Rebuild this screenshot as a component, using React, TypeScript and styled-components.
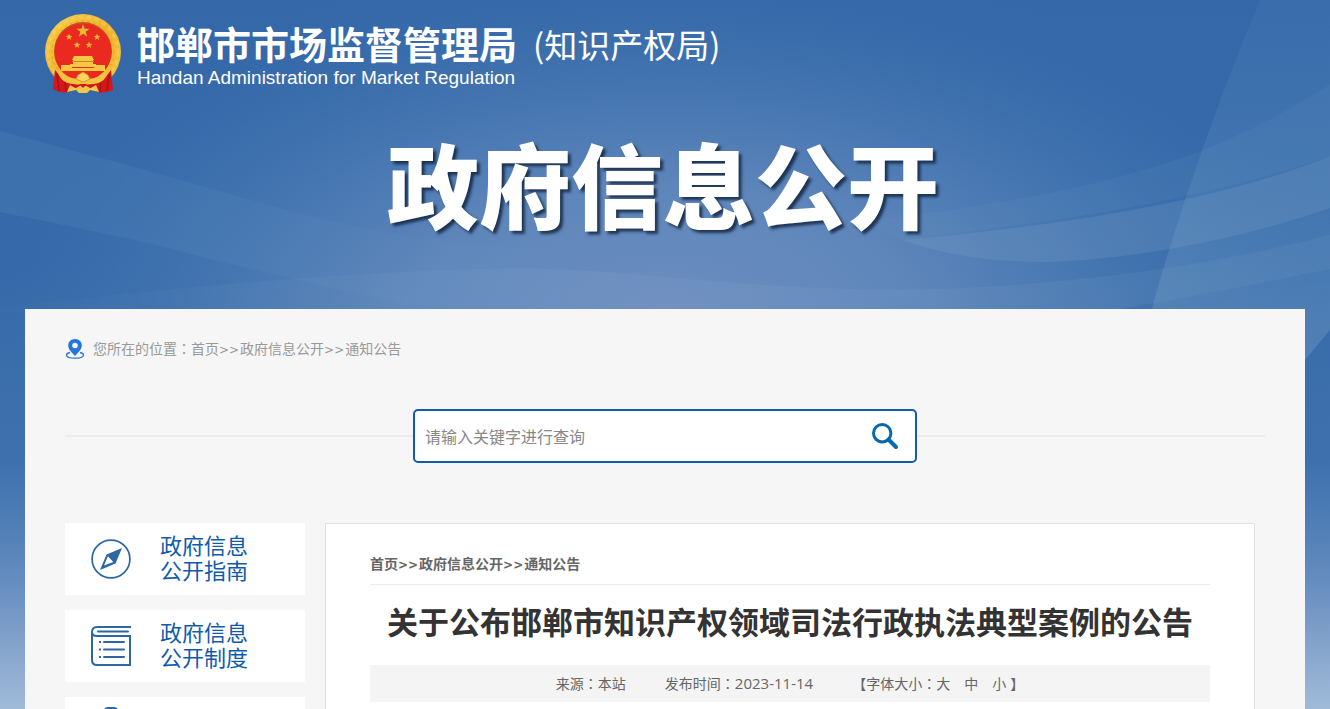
import React from 'react';
import styled, { createGlobalStyle } from 'styled-components';

const sans = '"Noto Sans CJK SC", "Liberation Sans", sans-serif';
const brand = '#0f5bad';

const GlobalStyle = createGlobalStyle`
  *, *::before, *::after { box-sizing: border-box; }
  body { margin: 0; font-family: ${sans}; background: #9fbad9; }
  a { color: inherit; text-decoration: none; }
  h1, h2, p { margin: 0; }
`;

const Page = styled.div`
  position: relative;
  height: 100vh;
  overflow: hidden;
  background: linear-gradient(#3568a9 0, #3469aa 260px, #3b6eab 380px, #3e70ae 460px, #5482b8 540px, #6a8fc1 590px, #86a5cc 650px, #a0bbd9 709px);
`;

const Backdrop = styled.svg`
  position: absolute;
  top: 0;
  left: 0;
  width: 100%;
  height: 709px;
`;

const Inner = styled.div`
  position: relative;
  max-width: 1280px;
  margin: 0 auto;
`;

const Header = styled.header`
  display: flex;
  flex-direction: column;
  height: 309px;
  color: #fff;
`;

const Brand = styled.a`
  display: flex;
  align-items: flex-start;
  padding: 12px 0 0 18px;
`;

const BrandText = styled.div`
  display: flex;
  flex-direction: column;
  margin-left: 16px;
  padding-top: 10px;
`;

const BrandNames = styled.div`
  display: flex;
  align-items: center;
  gap: 16px;
  height: 44px;
  white-space: nowrap;
`;

const OrgName = styled.span`
  font-size: 38px;
  font-weight: 700;
  line-height: 44px;
  padding-bottom: 2px;
`;

const OrgSuffix = styled.span`
  font-size: 33px;
  line-height: 42px;
`;

const OrgEnglish = styled.span`
  font: 19px/24px "Liberation Sans", sans-serif;
`;

const Banner = styled.p`
  padding: 28px 4px 0 0;
  text-align: center;
  font-size: 92px;
  font-weight: 900;
  line-height: 120px;
  text-shadow: 3px 3px 3px rgba(10, 25, 50, 0.75);
`;

const Panel = styled.main`
  background: #f6f6f6;
  padding: 28px 40px 40px;
`;

const Location = styled.nav`
  display: flex;
  align-items: center;
  height: 24px;
  color: #999;
  font-size: 14px;
`;

const LocationText = styled.span`
  margin-left: 8px;
  line-height: 22px;
`;

const Separator = styled.span`
  padding-right: 1px;
  font-family: "DejaVu Sans", sans-serif;
  font-size: 12px;
  font-weight: inherit;
`;

/* The Traditional Chinese face centres the full-width colon in its cell. */
const Colon = styled.span`
  font-family: "Noto Sans CJK TC", sans-serif;
`;

const SearchRow = styled.form`
  display: flex;
  align-items: center;
  margin-top: 48px;

  &::before, &::after {
    content: '';
    flex: 1;
    height: 2px;
    background: #ececec;
  }
`;

const SearchBox = styled.div`
  display: flex;
  width: 504px;
  height: 54px;
  border: 2px solid ${brand};
  border-radius: 5px;
  background: #fff;
`;

const SearchInput = styled.input`
  flex: 1;
  min-width: 0;
  padding: 0 10px;
  border: 0;
  background: none;
  outline: none;
  font: 16px/24px ${sans};
  color: #333;

  &::placeholder { color: #888; opacity: 1; }
`;

const SearchButton = styled.button`
  display: flex;
  align-items: center;
  justify-content: center;
  width: 60px;
  padding: 0;
  border: 0;
  background: none;
  cursor: pointer;
`;

const Columns = styled.div`
  display: flex;
  align-items: flex-start;
  gap: 20px;
  margin-top: 60px;
  padding-right: 10px;
`;

const Sidebar = styled.nav`
  display: flex;
  flex-direction: column;
  gap: 15px;
  flex: 0 0 240px;
`;

const SideLink = styled.a`
  display: flex;
  align-items: center;
  gap: 29px;
  height: 72px;
  padding-left: 26px;
  background: #fff;
  color: ${brand};
  font-size: 22px;
  line-height: 25px;
`;

const SideLabel = styled.span`
  padding-bottom: 4px;
`;

const Article = styled.article`
  flex: 1;
  min-width: 0;
  padding: 20px 44px 60px;
  border: 1px solid #e0e0e0;
  background: #fff;
`;

const Trail = styled.nav`
  height: 41px;
  border-bottom: 1px solid #ebebeb;
  color: #666;
  font-size: 14px;
  font-weight: 700;
  line-height: 38px;
`;

const Title = styled.h1`
  padding: 14px 0 22px;
  color: #333;
  font-size: 31px;
  font-weight: 700;
  line-height: 44px;
  text-align: center;
`;

const Meta = styled.div`
  display: flex;
  justify-content: center;
  gap: 39px;
  height: 37px;
  background: #f4f4f4;
  color: #666;
  font-size: 14px;
  line-height: 37px;
  white-space: nowrap;
`;

const Published = styled.time`
  font-family: "Open Sans", sans-serif;
  font-size: 15px;
`;

const Sizes = styled.span`
  display: flex;
`;

const SizeButton = styled.button`
  margin-right: 14px;
  padding: 0;
  border: 0;
  background: none;
  color: inherit;
  font: inherit;
  cursor: pointer;

  &:last-of-type { margin-right: 4px; }
`;

const starPoints = (cx: number, cy: number, r: number) =>
  Array.from({ length: 10 }, (_, i) => {
    const radius = i % 2 ? r * 0.4 : r;
    const angle = (Math.PI / 5) * i - Math.PI / 2;
    return `${(cx + radius * Math.cos(angle)).toFixed(2)},${(cy + radius * Math.sin(angle)).toFixed(2)}`;
  }).join(' ');

const Sky = () => (
  <Backdrop viewBox="0 0 1330 709" preserveAspectRatio="xMidYMin slice" aria-hidden="true">
    <defs>
      <radialGradient id="glow" gradientUnits="userSpaceOnUse" cx="0" cy="0" r="1" gradientTransform="translate(665 310) scale(700 350)">
        <stop offset="0" stopColor="#6d8dbf" />
        <stop offset="0.35" stopColor="#6188bc" stopOpacity="0.94" />
        <stop offset="0.7" stopColor="#4475b0" stopOpacity="0.75" />
        <stop offset="1" stopColor="#386bab" stopOpacity="0" />
      </radialGradient>
      <linearGradient id="slab" x1="0" y1="0" x2="0" y2="1">
        <stop offset="0" stopColor="#6fa0c8" stopOpacity="0.08" />
        <stop offset="1" stopColor="#8fb4d0" stopOpacity="0.28" />
      </linearGradient>
      <linearGradient id="fadeOut" x1="0" y1="0" x2="1" y2="0">
        <stop offset="0" stopColor="#6ba0bc" stopOpacity="0.16" />
        <stop offset="1" stopColor="#7ba2cc" stopOpacity="0.02" />
      </linearGradient>
      <linearGradient id="hill" x1="0" y1="0" x2="1" y2="0">
        <stop offset="0" stopColor="#8fb0cc" stopOpacity="0.02" />
        <stop offset="0.4" stopColor="#8fb0cc" stopOpacity="0.13" />
        <stop offset="1" stopColor="#8fb0cc" stopOpacity="0.1" />
      </linearGradient>
    </defs>
    <rect width="1330" height="380" fill="url(#glow)" />
    <path d="M0 131Q134 166 268 205T560 250L560 320H490Q320 289 153 244Q70 226 0 212Z" fill="url(#fadeOut)" />
    <path d="M0 308Q300 272 517 268C640 270 720 288 900 290Q1130 286 1330 235V269Q1200 296 1100 312H0Z" fill="url(#hill)" />
    <path d="M860 221Q1080 198 1206 149Q1280 118 1330 84V156Q1220 195 1050 221L903 240Z" fill="#78a6c8" fillOpacity="0.1" />
    <path d="M903 240Q1190 214 1330 156V208Q1190 256 1050 262Q960 262 903 240Z" fill="#8fb4cc" fillOpacity="0.18" />
    <path d="M1260 0Q1222 90 1187 194Q1165 260 1152 309V360H1305L1330 330V0Z" fill="url(#slab)" />
  </Backdrop>
);

const Emblem = () => (
  <svg width="78" height="82" viewBox="0 0 78 82" role="img" aria-label="国徽">
    <defs>
      <linearGradient id="gold" x1="0" y1="0" x2="1" y2="1">
        <stop offset="0" stopColor="#f8cf4a" />
        <stop offset="0.5" stopColor="#efb32c" />
        <stop offset="1" stopColor="#f5c63c" />
      </linearGradient>
    </defs>
    <circle cx="40" cy="40" r="38" fill="url(#gold)" />
    <circle cx="40" cy="40" r="35" fill="none" stroke="#fbe08a" strokeWidth="3" strokeDasharray="5 3" opacity="0.3" />
    <circle cx="40" cy="40" r="31" fill="none" stroke="#c98a1c" strokeWidth="1" strokeDasharray="3 3" opacity="0.4" />
    <circle cx="40" cy="39" r="29" fill="#c4571c" />
    <circle cx="40" cy="40" r="28.500" fill="#ea2a20" />
    <polygon points={starPoints(40, 19, 7)} fill="#e9b934" />
    {[[26, 25], [54, 25], [34, 33], [46, 33]].map(([x, y]) => (
      <polygon key={x} points={starPoints(x, y, 3.6)} fill="#e9b934" />
    ))}
    <path d="M31 44H49L51 48H29ZM30 48H50V52H53V55H27V52H30ZM18 53H29V56H51V53H62V59H18Z" fill="#f4c842" />
    <path d="M29 49.500H51" stroke="#d0822a" strokeWidth="1" />
    <path d="M12 58Q18 66 28 70L53 70Q63 66 68 58L70 78Q60 82 54 80L40 72L26 80Q18 82 10 77Z" fill="#d3171b" />
    <path d="M14 62L16 79M22 68L23 80M66 62L64 79M58 68L57 80" stroke="#a81216" strokeWidth="1.500" />
    <path d="M14 56Q22 67 35 67L40 61L45 67Q58 67 66 56Q64 71 50 72L40 73L30 72Q16 71 14 56Z" fill="#f3c240" />
    <path d="M40 60L45 63L47 67L40 70L33 67L35 63Z" fill="#f8d55a" stroke="#c98a1c" strokeWidth="0.700" />
    <path d="M24 80L27 73L34 77L40 74L46 77L53 73L56 80L47 78L44 81H36L33 78Z" fill="#f3c84c" />
    <path d="M36 72L44 72L40 76Z" fill="#d3171b" />
  </svg>
);

const PinIcon = () => (
  <svg width="20" height="22" viewBox="0 0 20 22" aria-hidden="true">
    <path d="M5 14.500C2.500 15 1.500 16 1.500 17C1.500 19 5 20.200 10 20.200S18.500 19 18.500 17C18.500 16 17.500 15 15 14.500" fill="none" stroke="#2a73dc" strokeWidth="1.300" />
    <path fillRule="evenodd" d="M10 1C6 1 3.200 3.900 3.200 7.500C3.200 11.500 7 14.500 10 18C13 14.500 16.800 11.500 16.800 7.500C16.800 3.900 14 1 10 1ZM10 4.700A2.800 2.800 0 1 1 10 10.300A2.800 2.800 0 0 1 10 4.700Z" fill="#2475e2" />
  </svg>
);

const SearchIcon = () => (
  <svg width="28" height="28" viewBox="0 0 28 28" aria-hidden="true">
    <circle cx="11.200" cy="11.200" r="8.700" fill="none" stroke="#046aad" strokeWidth="3" />
    <path d="M17.500 17.500L25 25" stroke="#046aad" strokeWidth="4" strokeLinecap="round" />
  </svg>
);

const CompassIcon = () => (
  <svg width="40" height="40" viewBox="0 0 40 40" aria-hidden="true">
    <circle cx="20" cy="20" r="18.900" fill="none" stroke="#2c67a8" strokeWidth="1.700" />
    <path fillRule="evenodd" d="M31 9L24.500 24.500L9 31L15.500 15.500ZM17 17L13 26.500L22.500 23Z" fill="#2c67a8" />
    <path d="M17 17L19.500 16L24 21L22.500 23Z" fill="#2c67a8" />
  </svg>
);

const BookIcon = () => (
  <svg width="40" height="40" viewBox="0 0 40 40" fill="none" stroke="#2c67a8" strokeWidth="2" aria-hidden="true">
    <path d="M40 1H6Q1 1 1 6V34Q1 39 6 39H39V10H6Q1 10 1 6" />
    <path d="M7 5.500H37M13 16H33M13 23.500H33M13 31H33" strokeLinecap="round" />
    <path d="M8 16H10M8 23.500H10M8 31H10" />
  </svg>
);

const ClipboardIcon = () => (
  <svg width="40" height="52" viewBox="0 0 40 52" fill="none" stroke="#2c67a8" strokeWidth="2" aria-hidden="true">
    <path d="M14 7V4Q14 1 17 1H23Q26 1 26 4V7" fill="#2c67a8" />
    <path d="M10 7H30V12H10ZM9 9H3V50H37V9H31M11 22H29M11 31H29M11 40H29" />
  </svg>
);

const crumbs = ['首页', '政府信息公开', '通知公告'];

const Crumbs = () => (
  <>
    {crumbs.map((label, i) => (
      <React.Fragment key={label}>
        {i > 0 && <Separator>&gt;&gt;</Separator>}
        <a href="#">{label}</a>
      </React.Fragment>
    ))}
  </>
);

const sections = [
  { icon: <CompassIcon />, lines: ['政府信息', '公开指南'] },
  { icon: <BookIcon />, lines: ['政府信息', '公开制度'] },
];

export default function App() {
  return (
    <Page>
      <GlobalStyle />
      <Sky />
      <Inner>
        <Header>
          <Brand href="#">
            <Emblem />
            <BrandText>
              <BrandNames>
                <OrgName>邯郸市市场监督管理局</OrgName>
                <OrgSuffix>(知识产权局)</OrgSuffix>
              </BrandNames>
              <OrgEnglish>Handan Administration for Market Regulation</OrgEnglish>
            </BrandText>
          </Brand>
          <Banner>政府信息公开</Banner>
        </Header>
        <Panel>
          <Location>
            <PinIcon />
            <LocationText>您所在的位置<Colon>：</Colon><Crumbs /></LocationText>
          </Location>
          <SearchRow onSubmit={(e) => e.preventDefault()}>
            <SearchBox>
              <SearchInput type="text" placeholder="请输入关键字进行查询" aria-label="请输入关键字进行查询" />
              <SearchButton type="submit" aria-label="查询">
                <SearchIcon />
              </SearchButton>
            </SearchBox>
          </SearchRow>
          <Columns>
            <Sidebar>
              {sections.map(({ icon, lines }) => (
                <SideLink href="#" key={lines[1]}>
                  {icon}
                  <SideLabel>{lines[0]}<br />{lines[1]}</SideLabel>
                </SideLink>
              ))}
              <SideLink href="#" aria-label="政府信息公开">
                <ClipboardIcon />
              </SideLink>
            </Sidebar>
            <Article>
              <Trail><Crumbs /></Trail>
              <Title>关于公布邯郸市知识产权领域司法行政执法典型案例的公告</Title>
              <Meta>
                <span>来源<Colon>：</Colon>本站</span>
                <span>发布时间<Colon>：</Colon><Published dateTime="2023-11-14">2023-11-14</Published></span>
                <Sizes>
                  【字体大小<Colon>：</Colon>
                  <SizeButton type="button">大</SizeButton>
                  <SizeButton type="button">中</SizeButton>
                  <SizeButton type="button">小</SizeButton>
                  】
                </Sizes>
              </Meta>
            </Article>
          </Columns>
        </Panel>
      </Inner>
    </Page>
  );
}
